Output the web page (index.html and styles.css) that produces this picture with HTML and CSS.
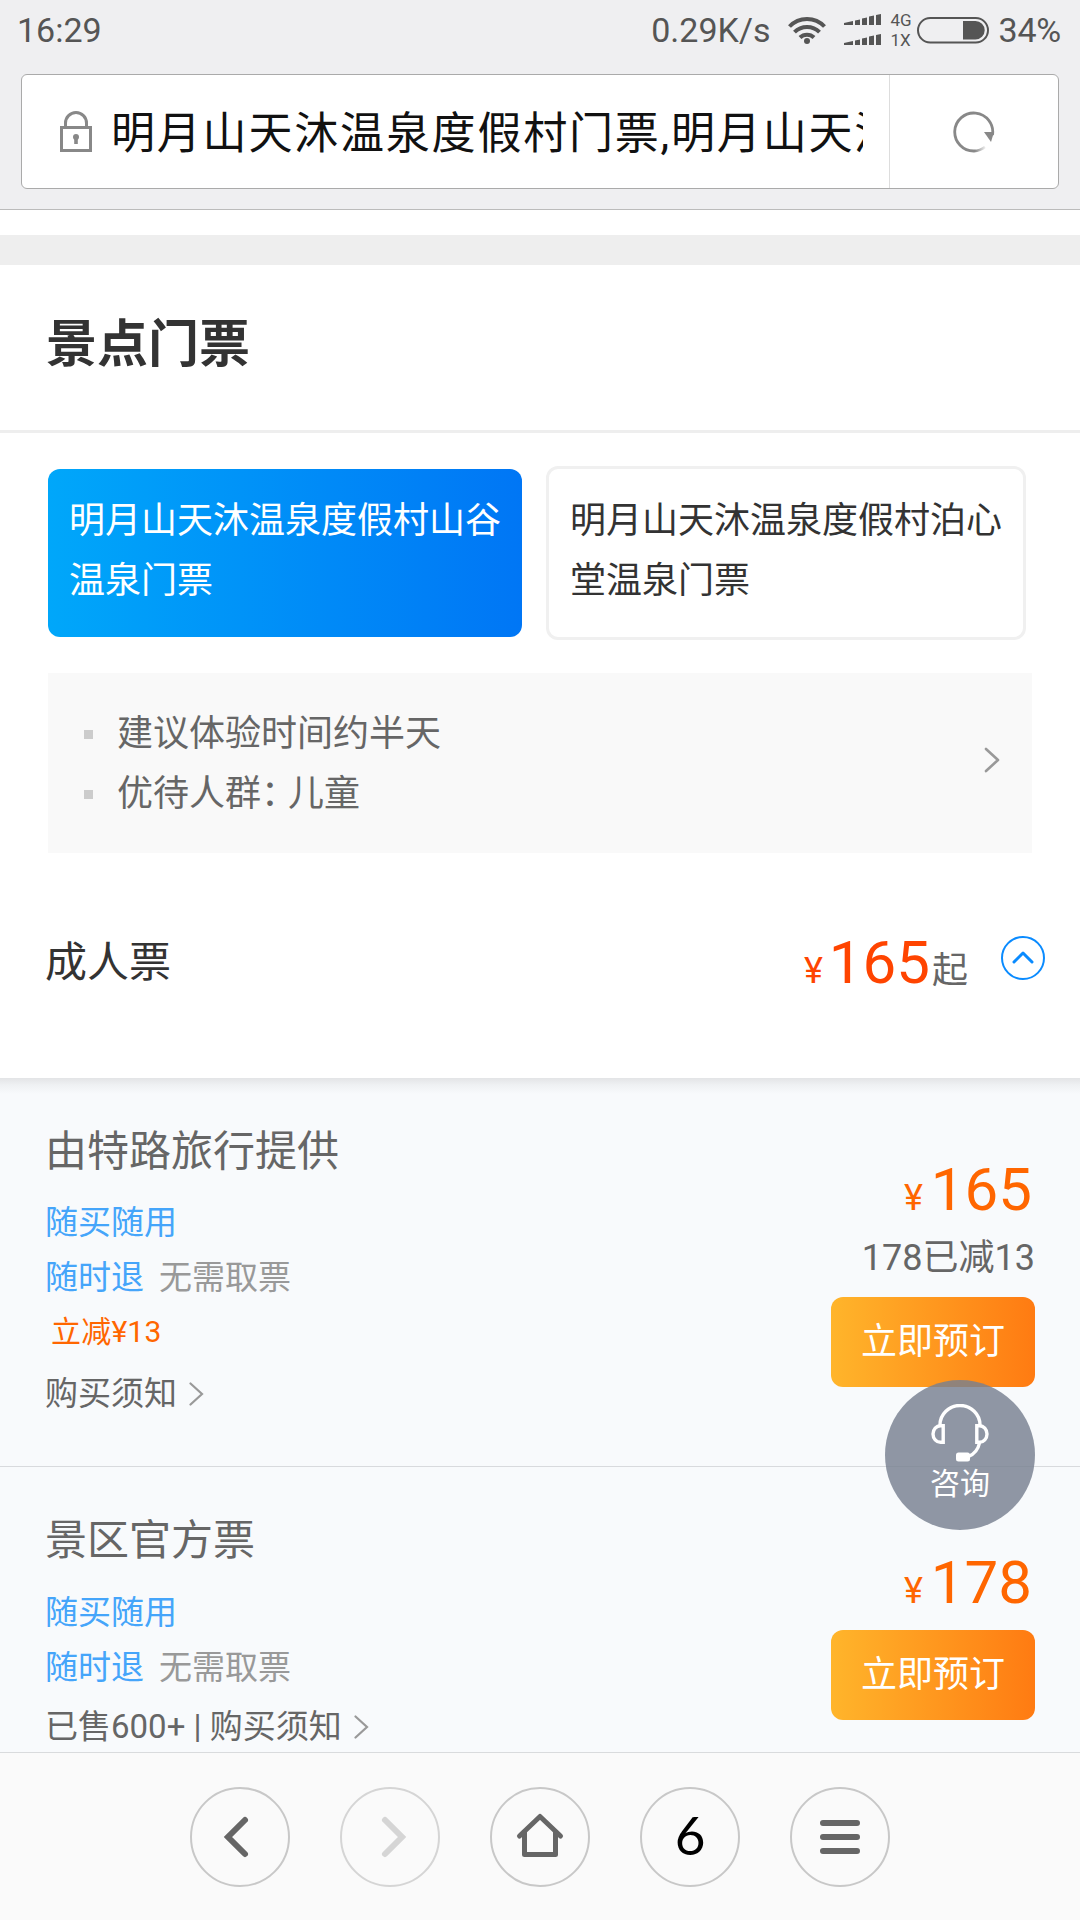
FILE: index.html
```html
<!DOCTYPE html>
<html lang="zh-CN">
<head>
<meta charset="utf-8">
<title>明月山天沐温泉度假村门票</title>
<link rel="stylesheet" href="styles.css">
</head>
<body>
<header class="browser-top">
  <div class="status">
    <span class="clock">16:29</span>
    <div class="status-right">
      <span class="speed">0.29K/s</span>
      <svg class="wifi" width="38" height="28" viewBox="0 0 38 28" fill="none" stroke="#555" stroke-width="4"><path d="M1.500 10.500a24 24 0 0 1 35 0M6.500 16.200a17.500 17.500 0 0 1 25 0M12 21.500a10 10 0 0 1 14 0"/><circle cx="19" cy="25" r="3" fill="#555" stroke="none"/></svg>
      <svg class="signal" width="38" height="32" viewBox="0 0 38 32" fill="#555"><path id="bars" d="M0 11v-2l9-2v4zM11 11V6.500l5-1V11zM18 11V4.500l5-1V11zM25 11V2.500l5-1V11zM32 11V1l5-1v11z"/><use href="#bars" y="20"/></svg>
      <div class="nets"><span>4G</span><span>1X</span></div>
      <svg class="battery" width="72" height="27" viewBox="0 0 72 27"><rect x="1" y="1" width="70" height="24.500" rx="12.250" fill="none" stroke="#555" stroke-width="2"/><path d="M46 4h12.500a9.200 9.200 0 0 1 0 18.400H46z" fill="#555"/></svg>
      <span class="percent">34%</span>
    </div>
  </div>
  <div class="address">
    <svg class="lock" width="32" height="41" viewBox="0 0 32 41" fill="none" stroke="#888" stroke-width="3"><rect x="1.500" y="16.500" width="29" height="23"/><path d="M5.500 16v-4a10.500 10.500 0 0 1 21 0v4"/><circle cx="16" cy="26" r="3" fill="#888" stroke="none"/><path d="M16 26v7" stroke-width="3.600"/></svg>
    <span class="url">明月山天沐温泉度假村门票,明月山天沐</span>
    <div class="reload"><svg width="42" height="42" viewBox="0 0 42 42"><defs><linearGradient id="fade" gradientUnits="userSpaceOnUse" x1="22" y1="0" x2="34" y2="0"><stop offset="0" stop-color="#888"/><stop offset="1" stop-color="#fff"/></linearGradient></defs><path d="M21 40A19 19 0 1 1 39.500 24" fill="none" stroke="#888" stroke-width="2.800"/><path d="M21 40a19 19 0 0 0 11-4" fill="none" stroke="url(#fade)" stroke-width="2.800"/><path d="M31 21h10l-3 10z" fill="#888"/></svg></div>
  </div>
</header>

<main class="page">
  <h1 class="title">景点门票</h1>
  <div class="tabs">
    <div class="tab active">明月山天沐温泉度假村山谷温泉门票</div>
    <div class="tab">明月山天沐温泉度假村泊心堂温泉门票</div>
  </div>
  <div class="info">
    <ul class="tips">
      <li>建议体验时间约半天</li>
      <li>优待人群<span class="colon">：</span>儿童</li>
    </ul>
    <svg width="16" height="26" viewBox="0 0 16 26" fill="none" stroke="#999" stroke-width="2.600" stroke-linecap="round" stroke-linejoin="round"><path d="M2 2l12 11L2 24"/></svg>
  </div>
  <div class="group">
    <span class="group-name">成人票</span>
    <div class="price from"><span class="yen">¥</span><span class="num">165</span><span class="qi">起</span></div>
    <svg class="toggle" width="44" height="44" viewBox="0 0 44 44" fill="none" stroke="#0a8bff"><circle cx="22" cy="22" r="21" stroke-width="2"/><path d="M13 26l9-9 9 9" stroke-width="3" stroke-linecap="round" stroke-linejoin="round"/></svg>
  </div>

  <section class="offers">
    <article class="offer first">
      <div class="detail">
        <h2>由特路旅行提供</h2>
        <p class="blue">随买随用</p>
        <p><span class="blue">随时退</span><span class="gray">无需取票</span></p>
        <p class="discount">立减¥13</p>
        <p class="notice">购买须知<svg width="15" height="24" viewBox="0 0 15 24" fill="none" stroke="#999" stroke-width="2.200" stroke-linecap="round"><path d="M1.500 1.500L13 12 1.500 22.500"/></svg></p>
      </div>
      <div class="buy">
        <div class="price"><span class="yen">¥</span><span class="num">165</span></div>
        <p class="was">178已减13</p>
        <div class="book">立即预订</div>
      </div>
    </article>
    <article class="offer second">
      <div class="detail">
        <h2>景区官方票</h2>
        <p class="blue">随买随用</p>
        <p><span class="blue">随时退</span><span class="gray">无需取票</span></p>
        <p class="notice"><span class="sold">已售600+ | </span>购买须知<svg width="15" height="24" viewBox="0 0 15 24" fill="none" stroke="#999" stroke-width="2.200" stroke-linecap="round"><path d="M1.500 1.500L13 12 1.500 22.500"/></svg></p>
      </div>
      <div class="buy">
        <div class="price"><span class="yen">¥</span><span class="num">178</span></div>
        <div class="book">立即预订</div>
      </div>
    </article>
  </section>
</main>

<div class="consult">
  <svg width="58" height="58" viewBox="0 0 58 58" fill="none" stroke="#fff" stroke-width="3.400"><path d="M9 22v-1a20 19.500 0 0 1 40 0v1"/><path d="M12.200 21.700v16.600H9.500a7.500 8.300 0 0 1 0-16.600zM45.800 21.700v16.600h2.700a7.500 8.300 0 0 0 0-16.600z"/><path d="M48.500 39c-1.500 7-5 11-11 13.500"/><rect x="25" y="48.500" width="14" height="9" rx="2.500" fill="#fff" stroke="none"/></svg>
  <span>咨询</span>
</div>

<nav class="toolbar">
  <div class="tool"><svg width="98" height="98" viewBox="0 0 98 98" fill="none" stroke="#666" stroke-width="6" stroke-linecap="round"><path d="M54 32L37 49l17 17"/></svg></div>
  <div class="tool disabled"><svg width="98" height="98" viewBox="0 0 98 98" fill="none" stroke="#d5d5d5" stroke-width="6" stroke-linecap="round"><path d="M44 32l17 17-17 17"/></svg></div>
  <div class="tool"><svg width="98" height="98" viewBox="0 0 98 98" fill="none" stroke="#666" stroke-width="5" stroke-linecap="round" stroke-linejoin="round"><path d="M28.500 48L49 28.500 69.500 48M33.500 44v22.500h31V44"/></svg></div>
  <div class="tool count">6</div>
  <div class="tool"><svg width="98" height="98" viewBox="0 0 98 98" fill="none" stroke="#666" stroke-width="6" stroke-linecap="round"><path d="M32 35h34M32 49h34M32 63h34"/></svg></div>
</nav>
</body>
</html>
```
FILE: styles.css
```css
* { box-sizing: border-box; margin: 0; padding: 0; }
body {
  width: 1080px;
  height: 1920px;
  overflow: hidden;
  position: relative;
  display: flex;
  flex-direction: column;
  background: #fff;
  color: #333;
  font-family: Roboto, "Noto Sans CJK SC", sans-serif;
  font-weight: 400;
}
svg { display: block; flex: none; }

.browser-top { height: 210px; flex: none; background: #efeff1; border-bottom: 1px solid #bbb; }
.status { height: 74px; padding: 0 19px 14px 17px; display: flex; justify-content: space-between; align-items: center; color: #555; font-size: 34px; line-height: 60px; white-space: nowrap; }
.status-right { display: flex; align-items: center; }
.speed { margin-right: 18px; }
.wifi { margin-right: 18px; }
.signal { margin-right: 8px; }
.nets { width: 24px; display: flex; flex-direction: column; font-size: 17px; line-height: 20px; margin-right: 3px; }
.battery { margin-right: 9px; }
.percent { letter-spacing: -.2px; }
.address { height: 115px; margin: 0 21px; border: 1px solid #aaa; border-radius: 6px; background: #fff; display: flex; align-items: center; padding-left: 38px; }
.lock { margin-right: 19px; }
.url { width: 752px; padding-top: 4px; overflow: hidden; white-space: nowrap; font-size: 44px; line-height: 70px; letter-spacing: 1.8px; color: #111; }
.reload { flex: 1; height: 113px; margin-left: 26px; border-left: 1px solid #ddd; display: flex; align-items: center; justify-content: center; }

.page { flex: 1; min-height: 0; padding-top: 25px; display: flex; flex-direction: column; overflow: hidden; }
.title { flex: none; height: 198px; padding: 44px 46px 0; border-top: 30px solid #eee; border-bottom: 3px solid #eee; font-size: 51px; line-height: 72px; font-weight: 700; }
.tabs { flex: none; display: flex; gap: 21px; padding: 33px 45px 0; }
.tab { width: 480px; height: 174px; padding: 22px 21px 0; border: 3px solid #f0f0f0; border-radius: 12px; font-size: 36px; line-height: 60px; }
.tab.active { width: 474px; height: 168px; margin: 3px; border: 0; color: #fff; background: linear-gradient(90deg, #00a7fa, #0076f5); }
.info { flex: none; height: 180px; margin: 33px 48px 0; padding: 0 32px 6px 36px; background: #f9f9f9; display: flex; justify-content: space-between; align-items: center; color: #666; font-size: 36px; line-height: 60px; }
.tips { list-style: none; padding-top: 8px; }
.tips li { display: flex; align-items: center; }
.tips li::before { content: ""; width: 9px; height: 9px; margin-right: 24px; background: #ccc; }
.colon { letter-spacing: -9px; }
.group { flex: none; height: 225px; padding: 74px 35px 0 45px; display: flex; align-items: flex-start; }
.group-name { flex: 1; font-size: 42px; line-height: 72px; }
.price { display: flex; align-items: baseline; color: #ff6600; line-height: 72px; }
.yen { font-size: 36px; margin-right: 6px; }
.num { font-size: 60px; }
.price.from { color: #ff4400; }
.qi { font-size: 36px; color: #666; margin-left: 2px; }
.toggle { margin: 9px 0 0 33px; }

.offers { flex: 1; background: linear-gradient(#e3e4e6, #eff1f3 7px, #f8fafc 16px); color: #666; }
.offer { display: flex; justify-content: space-between; padding: 0 45px; }
.offer.first { height: 389px; border-bottom: 1px solid #d8dadd; }
.detail { font-size: 33px; }
.detail h2 { font-size: 42px; font-weight: 400; line-height: 60px; margin: 44px 0 13px; }
.second .detail h2 { margin-bottom: 14px; }
.detail p { line-height: 55px; }
.blue { color: #45a5fa; }
.gray { color: #999; margin-left: 15px; }
.detail .discount { font-size: 30px; line-height: 54px; color: #ff6600; padding-left: 6px; letter-spacing: .2px; }
.detail .notice { line-height: 70px; display: flex; align-items: center; }
.detail .sold { white-space: pre; }
.second .detail .notice { line-height: 64px; }
.notice svg { margin-left: 12px; }
.buy { display: flex; flex-direction: column; align-items: flex-end; padding-top: 76px; }
.buy .price { padding-right: 3px; margin-bottom: -3px; }
.buy .yen { margin-right: 8px; }
.was { font-size: 36px; line-height: 54px; margin-bottom: 12px; }
.book { width: 204px; height: 90px; border-radius: 12px; background: linear-gradient(90deg, #ffb52b, #ff7b12); color: #fff; font-size: 36px; line-height: 90px; text-align: center; }
.second .buy { padding-top: 80px; }
.second .buy .price { margin-bottom: 3px; }

.consult { position: absolute; left: 885px; top: 1380px; width: 150px; height: 150px; border-radius: 50%; padding-top: 24px; background: rgba(120, 128, 144, .82); color: #fff; display: flex; flex-direction: column; align-items: center; font-size: 30px; line-height: 43px; }

.toolbar { height: 168px; flex: none; border-top: 1px solid #d9dbdd; background: #fafafa; display: flex; justify-content: center; gap: 50px; padding-top: 34px; }
.tool { width: 100px; height: 100px; border: 2px solid #c8c8c8; border-radius: 50%; display: flex; align-items: center; justify-content: center; }
.tool.disabled { border-color: #d5d5d5; }
.count { font: 400 53px/90px Lato, sans-serif; color: #000; padding-bottom: 5px; }
```
